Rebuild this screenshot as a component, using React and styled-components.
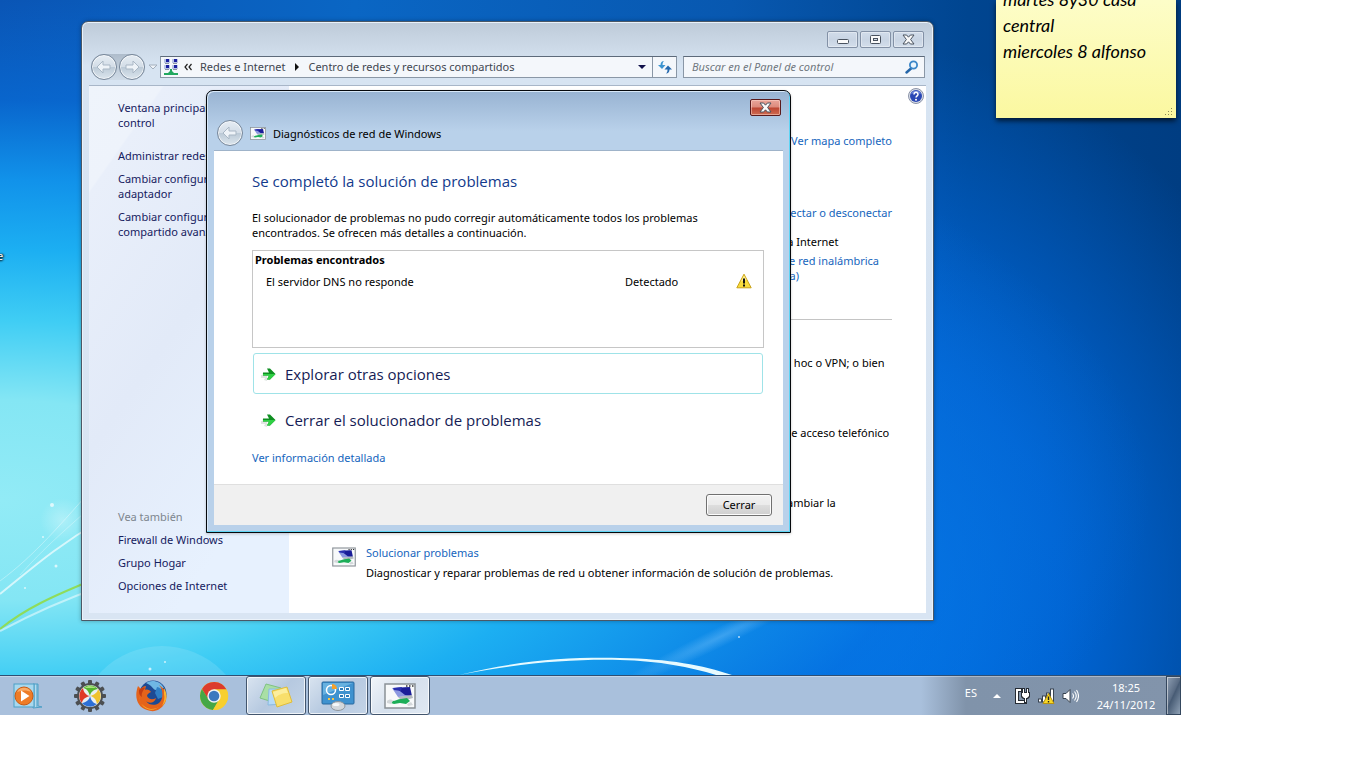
import { useState } from "react";
import styled, { createGlobalStyle, css } from "styled-components";

const GlobalStyle = createGlobalStyle`
  * {
    box-sizing: border-box;
  }
  body {
    margin: 0;
    background: #fff;
    font-family: "Noto Sans", "Open Sans", sans-serif;
    font-size: 11px;
    line-height: 15px;
    color: #000;
  }
  button, input {
    font: inherit;
    color: inherit;
  }
  h1, h2, p, ul {
    margin: 0;
    padding: 0;
  }
`;

/* ---------- desktop ---------- */

const Desktop = styled.main`
  position: relative;
  display: flex;
  flex-direction: column;
  width: calc(100% - 185px);
  height: calc(100vh - 53px);
  min-height: 640px;
  overflow: hidden;
  background:
    radial-gradient(ellipse 1150px 500px at 0 500px, #92ebf6 0%, #84e6f4 20%, #3fcdf4 36%, #1caff2 50%, #1192ea 64%, rgba(8, 112, 220, 0.6) 80%, rgba(8, 100, 205, 0) 100%),
    radial-gradient(ellipse 500px 560px at 840px 600px, #007cf2 0%, rgba(0, 106, 224, 0.85) 45%, rgba(0, 80, 180, 0) 100%),
    linear-gradient(90deg, #0a55b5, #0a66c4 30%, #0858b0 62%, #004590 82%, #003d82 100%);
`;

const Surface = styled.div`
  position: relative;
  flex: 1;
`;

const Streaks = styled.svg`
  position: absolute;
  left: 0;
  bottom: 0;
  width: 100%;
  height: 300px;
`;

const ShortcutLabel = styled.span`
  position: absolute;
  left: -3px;
  top: 248px;
  color: #fff;
  text-shadow: 0 1px 2px #000, 1px 0 2px #000;
`;

/* ---------- sticky note ---------- */

const Note = styled.article`
  position: absolute;
  top: 0;
  right: 5px;
  width: 180px;
  height: 118px;
  padding: 0 7px;
  background: linear-gradient(#fdfdc8, #fbf8a0);
  box-shadow: 0 3px 5px rgba(0, 0, 0, 0.65);
  font-family: "Segoe Print", Lato, sans-serif;
  font-style: italic;
  font-size: 18px;
  line-height: 26px;

  p {
    margin-top: -14px;
  }
  svg {
    position: absolute;
    right: 3px;
    bottom: 2px;
  }
`;

/* ---------- control panel window ---------- */

const Window = styled.section`
  position: absolute;
  left: 81px;
  right: 247px;
  top: 21px;
  bottom: 54px;
  display: flex;
  flex-direction: column;
  padding: 0 7px 7px;
  border: 1px solid #4b5866;
  border-radius: 7px 7px 0 0;
  background: linear-gradient(#becbd9, #d7e4f2 44px, #d9e5f3);
  box-shadow: inset 0 0 0 1px #eaf2fa, 0 0 4px rgba(0, 0, 0, 0.3);
`;

const Caption = styled.header`
  display: flex;
  justify-content: flex-end;
  align-items: flex-end;
  gap: 2px;
  height: 26px;
  padding-right: 2px;
`;

const CaptionButton = styled.button`
  display: flex;
  align-items: center;
  justify-content: center;
  width: 31px;
  height: 17px;
  padding: 0;
  border: 1px solid #8391a6;
  border-radius: 2px;
  background: linear-gradient(#d1dcea, #c8d4e3 50%, #d3deeb);
  box-shadow: inset 0 0 0 1px rgba(255, 255, 255, 0.35);
  ${(props) => props.$danger && css`
    border-color: #5a1a1c;
    background: linear-gradient(#eaa59a, #dc8a7c 48%, #bd4532 52%, #cf6c52);
    box-shadow: inset 0 0 0 1px rgba(255, 220, 210, 0.5);
  `}
`;

const Toolbar = styled.div`
  display: flex;
  align-items: center;
  height: 37px;
  padding: 0 1px 0 2px;
`;

const NavArrows = styled.div`
  display: flex;
  align-items: center;
  gap: 2px;
  margin-right: 3px;
  border-radius: 14px;
  background: linear-gradient(#aebccb, #d0dce8);
`;

const RoundButton = styled.button`
  display: flex;
  align-items: center;
  justify-content: center;
  width: 26px;
  height: 26px;
  padding: 0;
  border: 1px solid #77879a;
  border-radius: 50%;
  background: linear-gradient(#e6edf4 0%, #d3dde7 48%, #bccad7 52%, #dce6ee 100%);
  box-shadow: inset 0 0 0 1px rgba(255, 255, 255, 0.7);
`;

const PlainButton = styled.button`
  display: flex;
  align-items: center;
  justify-content: center;
  padding: 0;
  border: 0;
  background: none;
`;

const AddressBar = styled.nav`
  display: flex;
  align-items: center;
  flex: 1;
  height: 22px;
  margin: 0 6px 0 2px;
  padding-left: 2px;
  border: 1px solid #8a97a6;
  border-top-color: #5d6a7a;
  background: #f4f7fb;
  color: #3f4650;

  a {
    color: inherit;
    text-decoration: none;
  }
`;

const Crumbs = styled.div`
  display: flex;
  align-items: center;
  flex: 1;
  gap: 8px;
  padding-left: 5px;
`;

const Refresh = styled(PlainButton)`
  width: 24px;
  height: 20px;
  margin-left: 5px;
  border-left: 1px solid #8a97a6;
`;

const SearchBox = styled.label`
  display: flex;
  align-items: center;
  width: 242px;
  height: 22px;
  padding: 0 5px 0 8px;
  border: 1px solid #8a97a6;
  border-top-color: #5d6a7a;
  background: #f4f7fb;

  input {
    flex: 1;
    min-width: 0;
    padding: 0;
    border: 0;
    outline: 0;
    background: none;
    font-style: italic;
  }
  input::placeholder {
    color: #707880;
    opacity: 1;
  }
`;

const Body = styled.div`
  display: flex;
  flex: 1;
  min-height: 0;
  border-top: 1px solid #a8b6c8;
  background: #fff;
`;

const Sidebar = styled.aside`
  display: flex;
  flex-direction: column;
  justify-content: space-between;
  width: 200px;
  padding: 14px 6px 20px 29px;
  background: linear-gradient(125deg, #eff4fb 0, #eef3fb 60px, #e9effa 62px, #e2eaf8 45%, #e7f1fe 80%);
`;

const LinkList = styled.ul`
  display: grid;
  gap: 8px;
  list-style: none;

  a {
    color: #15205e;
    text-decoration: none;
  }
  .home {
    margin-bottom: 10px;
  }
  .label {
    color: #7e868e;
  }
`;

const Content = styled.div`
  flex: 1;
  min-width: 0;
  overflow: hidden;
`;

const HelpRow = styled.div`
  display: flex;
  justify-content: flex-end;
  padding: 2px 2px 0;
`;

const Link = styled.a`
  color: #1565bd;
  text-decoration: none;
`;

const NetworkPanel = styled.div`
  display: flex;
  flex-direction: column;
  align-items: flex-end;
  margin: 29px 34px 0 43px;
  padding-bottom: 36px;
  border-bottom: 1px solid #c4c4c4;
`;

const NetworkDetails = styled.div`
  display: grid;
  gap: 4px;
  width: 161px;
  margin-top: 14px;
`;

const ConnectLink = styled(Link)`
  margin-top: 57px;
`;

const TaskList = styled.div`
  display: grid;
  grid-auto-rows: 70px;
  margin: 15px 34px 0 43px;
`;

const Task = styled.div`
  display: grid;
  grid-template-columns: 24px 1fr;
  align-items: start;
  gap: 10px;

  svg {
    margin-top: 2px;
  }
  p {
    margin-top: 5px;
  }
`;

/* ---------- troubleshooter dialog ---------- */

const Dialog = styled.section`
  position: absolute;
  left: 206px;
  top: 90px;
  width: 585px;
  padding: 0 7px 7px;
  border: 1px solid #05080c;
  border-radius: 7px 7px 0 0;
  background: linear-gradient(#98b3d2, #b9d1ea 40px, #b9d1ea);
  box-shadow: inset -1px -1px 0 #5fd5f5, inset 1px 1px 0 #d8e8f8, 0 1px 3px rgba(0, 0, 0, 0.2);
`;

const DialogCaption = styled(Caption)`
  height: 25px;
`;

const DialogTitle = styled.div`
  display: flex;
  align-items: center;
  gap: 7px;
  height: 34px;
  padding-left: 3px;

  h1 {
    font-size: 11px;
    font-weight: 400;
  }
`;

const Client = styled.div`
  padding: 20px 19px 19px 38px;
  border-top: 1px solid #9fb3c9;
  background: #fff;

  h2 {
    font-family: "Open Sans", sans-serif;
    font-size: 15px;
    font-weight: 400;
    line-height: 20px;
    color: #123a8c;
  }
`;

const Summary = styled.p`
  max-width: 480px;
  && {
    margin: 19px 0 10px;
  }
`;

const ProblemBox = styled.div`
  height: 98px;
  padding: 0 2px;
  border: 1px solid #c6c6c6;

  table {
    width: 100%;
    border-collapse: collapse;
  }
  th {
    padding: 0;
    text-align: left;
    line-height: 17px;
  }
  td {
    padding: 5px 0 0;
    vertical-align: middle;
  }
  td:first-child {
    padding-left: 11px;
  }
  td:nth-child(2) {
    width: 111px;
  }
  td:last-child {
    width: 25px;
  }
  svg {
    display: block;
  }
`;

const CommandLink = styled.button`
  display: flex;
  align-items: center;
  gap: 8px;
  width: calc(100% - 2px);
  height: 41px;
  margin: 5px 1px 0;
  padding: 0 7px;
  border: 1px solid ${(props) => (props.$selected ? "#9fe3e8" : "transparent")};
  border-radius: 3px;
  background: #fff;
  color: #151c55;
  font-family: "Open Sans", sans-serif;
  font-size: 15px;
  line-height: 20px;
  text-align: left;
`;

const Details = styled.p`
  && {
    margin-top: 10px;
  }
`;

const DialogFooter = styled.footer`
  display: flex;
  justify-content: flex-end;
  padding: 9px 11px;
  border-top: 1px solid #dfdfdf;
  background: #f0f0f0;
`;

const PushButton = styled.button`
  width: 66px;
  height: 22px;
  padding: 0 0 2px;
  border: 1px solid #707070;
  border-radius: 3px;
  background: linear-gradient(#f2f2f2, #ebebeb 48%, #dddddd 52%, #cfcfcf);
  box-shadow: inset 0 0 0 1px #fcfcfc;
`;

/* ---------- taskbar ---------- */

const Taskbar = styled.footer`
  position: relative;
  display: flex;
  height: 40px;
  border-top: 1px solid #2f4f74;
  background: linear-gradient(90deg, #a9c0dc 0, #a9c0dc calc(100% - 260px), #8093aa calc(100% - 215px), #8294ab 100%);
  box-shadow: inset 0 1px 0 rgba(255, 255, 255, 0.35);
`;

const Apps = styled.div`
  display: flex;
  flex: 1;
  gap: 2px;
  margin-left: -2px;
`;

const AppButton = styled(PlainButton)`
  width: 60px;
  height: 39px;
  ${(props) => props.$open && css`
    border: 1px solid #43566e;
    border-radius: 3px;
    background: linear-gradient(135deg, #d9e4f0, #b6c9e0 50%, #c4d4e7);
    box-shadow: inset 0 0 0 1px rgba(255, 255, 255, 0.75);
  `}
  ${(props) => props.$active && css`
    background: linear-gradient(135deg, #f1f5fa, #d5e0ed 50%, #e0e9f3);
  `}
`;

const Tray = styled.div`
  display: flex;
  align-items: center;
  gap: 7px;
  color: #fff;
`;

const Language = styled.span`
  margin: 0 8px 6px 0;
`;

const HiddenIcons = styled(PlainButton)`
  margin-right: 4px;
`;

const Clock = styled.time`
  width: 80px;
  text-align: center;
  line-height: 17px;
`;

const ShowDesktop = styled.button`
  width: 15px;
  height: 39px;
  margin-left: -7px;
  padding: 0;
  border: 1px solid #34475e;
  background: linear-gradient(115deg, #8f9fb3, #5a6c84 45%, #475b74 50%, #8fa1b5);
  box-shadow: inset 1px 1px 0 rgba(255, 255, 255, 0.5);
`;

/* ---------- drawings ---------- */

const ArrowIcon = ({ flip }) => (
  <svg width="18" height="18" viewBox="0 0 18 18" aria-hidden="true">
    <path
      d={flip ? "M16 9l-6-6v4H3v4h7v4z" : "M2 9l6-6v4h7v4H8v4z"}
      fill="#eef3f8"
      stroke="#a9b7c5"
      strokeLinejoin="round"
    />
  </svg>
);

const CloseIcon = () => (
  <svg width="13" height="11" viewBox="0 0 13 11" aria-hidden="true">
    <path d="M1 1h3.6l1.9 2.2L8.400 1H12L8.600 5.500 12 10H8.400L6.500 7.800 4.600 10H1l3.400-4.500z" fill="#fafafa" stroke="#49525f" strokeLinejoin="round" />
  </svg>
);

const NetworkIcon = () => (
  <svg width="16" height="18" viewBox="0 0 16 18" aria-hidden="true">
    {[[1, 1], [9, 1], [1, 7], [9, 7]].map(([x, y]) => (
      <g key={`${x}-${y}`}>
        <rect x={x} y={y} width="6" height="4" fill="#b8c4e4" />
        <rect x={x + 2} y={y} width="3" height="3" fill="#1a1fa0" />
        <rect x={x + 1} y={y + 4} width="4" height="1" fill="#8a94a6" />
      </g>
    ))}
    <path d="M7 11h2v2l2 2h4v2H1v-2h4l2-2z" fill="#22a860" />
  </svg>
);

const TroubleIcon = ({ width = 16, height = 13 }) => (
  <svg width={width} height={height} viewBox="0 0 32 26" aria-hidden="true">
    <rect x="1" y="1" width="30" height="24" fill="#f7f9fa" stroke="#8a9197" strokeWidth="1.500" />
    <path d="M22 3h1.500M25 3h1.500M28 3h1.500" stroke="#333" strokeWidth="1.500" />
    <path d="M8 5l16-1 3 9-13 1z" fill="#8c98e0" />
    <path d="M12 5l14-1 2 9-7-1z" fill="#1a1d98" />
    <path d="M9 5l9-1-1 4-7-1z" fill="#2a2fae" />
    <path d="M14 14l14-2 1 3-11 3z" fill="#b4bac0" />
    <path d="M8 18c4 0 6-2 9-2l6-1 3 3-4 3-6-1-6 1-3-1z" fill="#1cae58" />
    <path d="M3 18c2-2 5-2 6 0l-2 3-4-1zM23 21l4-2 2 3-5 1z" fill="#d3d7da" />
  </svg>
);

const RefreshIcon = () => (
  <svg width="16" height="16" viewBox="0 0 16 16" aria-hidden="true">
    <path d="M7 2C5 2 3.500 3.500 3.500 6H1l4 4L8.500 6H5.500c0-2 .5-3 1.500-4z" fill="#3c94d0" />
    <path d="M9 14.500c2 0 3.500-1.500 3.500-4H15l-4-4-3.500 4h3c0 2-.5 3-1.500 4z" fill="#2468ae" />
  </svg>
);

const SearchIcon = () => (
  <svg width="14" height="14" viewBox="0 0 14 14" aria-hidden="true">
    <path d="M6 8.500 1.500 12.500" stroke="#2566a8" strokeWidth="2.400" strokeLinecap="round" />
    <circle cx="8.500" cy="5" r="3.600" fill="#eaf5fd" stroke="#3a86c8" strokeWidth="1.800" />
  </svg>
);

const HelpIcon = () => (
  <svg width="16" height="16" viewBox="0 0 16 16" aria-hidden="true">
    <circle cx="8" cy="8" r="7.500" fill="#d9dee8" stroke="#8b93a8" />
    <circle cx="8" cy="8" r="6" fill="#2947b4" />
    <path d="M3 6a5.500 5.500 0 0 1 10 0c-3-1.500-7-1.500-10 0z" fill="#7089dc" />
    <path d="M6 6.500c0-3 4.200-2.700 4 0C9.900 7.800 8 8 8 9.600" fill="none" stroke="#fff" strokeWidth="1.500" />
    <circle cx="8" cy="11.700" r="1" fill="#fff" />
  </svg>
);

const WarningIcon = () => (
  <svg width="16" height="16" viewBox="0 0 16 16" aria-label="Advertencia">
    <path d="M8 1.200 15.200 14.800H.8z" fill="#f9dc3c" stroke="#c9a116" strokeLinejoin="round" />
    <path d="M8 2.500 10.500 7 5 8.500z" fill="#fdf09a" />
    <path d="M8 5.500v5" stroke="#111" strokeWidth="2" />
    <path d="M8 11.500v2" stroke="#111" strokeWidth="2" />
  </svg>
);

const GreenArrow = () => (
  <svg width="16" height="16" viewBox="0 0 16 16" aria-hidden="true">
    <path d="M0 9h6v6l-3-1 1-2H0z" fill="#cdd3cf" opacity="0.600" />
    <path d="M1.500 7h6.500V2.500L14.500 8.500 8 14.500V10H1.500z" fill="#cdd3cf" opacity="0.500" />
    <path d="M2 6.500h6L6 2.500h3L14.500 8 9 13.500H6l2-4H2z" fill="#0f8f22" />
    <path d="M2 8h12.500L9 13.500H6l2-4H2z" fill="#2fd044" />
  </svg>
);

const MediaPlayerIcon = () => (
  <svg width="30" height="28" viewBox="0 0 30 28" aria-hidden="true">
    <path d="M20 2h5v22l4 1-9 1zM21 2v23M24 2v23" fill="#b5dbee" stroke="#4d9fc6" />
    <rect x="1" y="2" width="20" height="23" fill="#a8d8ee" stroke="#4d9fc6" />
    <circle cx="11" cy="14" r="9" fill="#ee7c27" stroke="#c95a12" />
    <path d="M4 10a8 8 0 0 1 14 0c-4-2-9-2-14 0z" fill="#f8ab68" />
    <path d="M8 8.500v11l8.500-5.500z" fill="#fff" />
  </svg>
);

const PinwheelIcon = () => (
  <svg width="34" height="34" viewBox="-17 -17 34 34" aria-hidden="true">
    {[0, 30, 60, 90, 120, 150, 180, 210, 240, 270, 300, 330].map((a) => (
      <rect key={a} x="-2" y="-16" width="4" height="6" rx="1" fill="#4c4f52" transform={`rotate(${a})`} />
    ))}
    <circle r="13" fill="#4c4f52" />
    <circle r="11" fill="#e9eef0" />
    {["#55b52e", "#efc22c", "#2c6fd6", "#e03a26"].map((color, i) => (
      <path key={color} d="M0 0C-2-5-5-7-8-7A10.600 10.600 0 0 1 7-8C3-7 0-4 0 0z" fill={color} transform={`rotate(${i * 90 + 8})`} />
    ))}
    <path d="M-5-8C-2-11 3-10 6-8 3-8-1-8-5-8z" fill="#a8e07c" />
  </svg>
);

const FirefoxIcon = () => (
  <svg width="34" height="34" viewBox="0 0 34 34" aria-hidden="true">
    <circle cx="18" cy="15" r="13.500" fill="#1d4a94" />
    <path d="M11 4c5-4 15-2 18 5-3 0-4 3-8 2-3 0-4-5-10-7z" fill="#6fb7e4" />
    <path d="M22 8c5 1 7 5 6 10l-5 2-3-6z" fill="#2f7fc6" />
    <path
      d="M3 7l3 3c1-2 3-3 5-3l-1 4c2-1 5 0 6 2-2 1-4 2-4 4 2 4 6 4 9 2-1 5-7 6-10 3 4 6 14 5 16-3 1-5 0-10-3-13 7 4 9 12 6 18C26 31 19 34 12 31 2 28-1 18 3 7z"
      fill="#e5631b"
    />
    <path d="M29 9c4 6 3 14-2 18 2-4 3-8 2-12zM4 17c0 7 5 12 12 13 4 0 7-1 9-3-7 7-20 4-21-10z" fill="#f9b32c" />
    <path d="M4 11c2-2 4-3 6-2-2 3-4 5-3 9-3-2-3-4-3-7z" fill="#c43c12" />
  </svg>
);

const ChromeIcon = () => (
  <svg width="30" height="30" viewBox="0 0 30 30" aria-hidden="true">
    <circle cx="15" cy="15" r="14" fill="#f7cf2e" />
    <path d="M3 8A14 14 0 0 1 27.500 8.500H15L9 18z" fill="#dc3b2c" />
    <path d="M2.900 8A14 14 0 0 0 14 29l6-10.500-11-1z" fill="#45a746" />
    <path d="M14.500 8.500h13A14 14 0 0 1 14 29l6.500-10.500z" fill="#f7cf2e" />
    <circle cx="15" cy="15" r="6.700" fill="#f2f4f4" />
    <circle cx="15" cy="15" r="5.300" fill="#3c79bf" />
  </svg>
);

const NotesIcon = () => (
  <svg width="34" height="28" viewBox="0 0 34 28" aria-hidden="true">
    <path d="M7 2l15 4-5 15L1 16z" fill="#a9dfa5" stroke="#7fc283" />
    <path d="M10 7l15 0 0 15-16 1z" fill="#b6dbf7" stroke="#8abbe0" />
    <path d="M13 9l15-4 5 15-15 5z" fill="#f8df6c" stroke="#e0bd3c" />
    <path d="M14 10l13-4 2 5c-6 0-10 2-13 5z" fill="#fcee9c" />
  </svg>
);

const ControlPanelIcon = () => (
  <svg width="34" height="30" viewBox="0 0 34 30" aria-hidden="true">
    <rect x="1" y="1" width="32" height="22" rx="1" fill="#3f92cf" stroke="#28699f" />
    <path d="M2 2h30L2 14z" fill="#67b1e0" />
    <circle cx="10" cy="9" r="4.500" fill="none" stroke="#fff" strokeWidth="1.500" />
    <path d="M11 8V3a5 5 0 0 1 5 5z" fill="#f6a12c" />
    <path d="M18.500 6.500h4v3h-4zM24.500 6.500h4v3h-4zM18.500 13.500h4v3h-4zM24.500 13.500h4v3h-4z" fill="#2d7ab8" stroke="#fff" />
    <path d="M7 17h2v2H7zM11 17h2v2h-2z" fill="#f9c440" />
    <ellipse cx="17" cy="25" rx="7" ry="4.500" fill="#d4d8dc" stroke="#8f969c" />
    <ellipse cx="15" cy="23.500" rx="3.500" ry="1.600" fill="#f6f8f9" />
  </svg>
);

const PlugIcon = () => (
  <svg width="18" height="18" viewBox="0 0 18 18" aria-hidden="true">
    <path d="M8 3H4v12h8" fill="none" stroke="#252b33" strokeWidth="4" strokeLinecap="square" />
    <path d="M8 3H4v12h8" fill="none" stroke="#fff" strokeWidth="2" />
    <path d="M9 1h3v4h1V1h3v4h1v5l-2 2h-1v4h-3v-4h-1l-2-2V5h1z" fill="#252b33" />
    <path d="M10 2h1v4h3V2h1v4h1v3l-2 2h-1v4h-1v-4h-1L9 9V6h1z" fill="#fff" />
  </svg>
);

const SignalIcon = () => (
  <svg width="17" height="16" viewBox="0 0 17 16" aria-hidden="true">
    {[[0, 11, 3], [4, 8, 6], [8, 5, 9], [12, 1, 13]].map(([x, y, h]) => (
      <rect key={x} x={x + 0.5} y={y} width="3" height={h} fill="#fff" stroke="#384350" />
    ))}
    <path d="M10.500 5.500 16 15.500H5z" fill="#f8d827" stroke="#b7920f" />
    <path d="M10.500 8.500v3.500M10.500 13v1.500" stroke="#222" strokeWidth="1.400" />
  </svg>
);

const SpeakerIcon = () => (
  <svg width="17" height="16" viewBox="0 0 17 16" aria-hidden="true">
    <path d="M1 5.500h3L8 1.500v13l-4-4H1z" fill="#fff" stroke="#384350" />
    <path d="M10.500 5.500q2 2.500 0 5M12.500 3.500q3.500 4.500 0 9M14.500 2q4 6 0 12" fill="none" stroke="#fff" strokeWidth="1.100" />
  </svg>
);

const Triangle = ({ d, fill, stroke }) => (
  <svg width="10" height="8" viewBox="0 0 10 8" aria-hidden="true">
    <path d={d} fill={fill} stroke={stroke} />
  </svg>
);

/* ---------- data ---------- */

const tasks = [
  {
    title: "Configurar una nueva conexión o red",
    text: "Configurar alguna conexión inalámbrica, de banda ancha, de acceso telefónico, ad hoc o VPN; o bien configurar un enrutador o punto de acceso.",
  },
  {
    title: "Conectarse a una red",
    text: "Conectarse o volver a conectarse a una conexión de red inalámbrica, cableada, o de acceso telefónico o VPN.",
  },
  {
    title: "Elegir grupo en el hogar y opciones de uso compartido",
    text: "Obtener acceso a archivos e impresoras ubicados en otros equipos de una red o cambiar la configuración de uso compartido.",
  },
  {
    title: "Solucionar problemas",
    text: "Diagnosticar y reparar problemas de red u obtener información de solución de problemas.",
  },
];

const apps = [
  { name: "Reproductor de Windows Media", Icon: MediaPlayerIcon },
  { name: "Galería", Icon: PinwheelIcon },
  { name: "Firefox", Icon: FirefoxIcon },
  { name: "Chrome", Icon: ChromeIcon },
  { name: "Notas rápidas", Icon: NotesIcon, open: true },
  { name: "Panel de control", Icon: ControlPanelIcon, open: true },
  { name: "Diagnósticos de red", Icon: () => <TroubleIcon width={32} height={26} />, open: true, active: true },
];

function ControlPanel() {
  return (
    <Window aria-label="Centro de redes y recursos compartidos">
      <Caption>
        <CaptionButton aria-label="Minimizar">
          <svg width="12" height="10" viewBox="0 0 12 10"><rect x="0.500" y="4.500" width="11" height="4" rx="1" fill="#fafafa" stroke="#49525f" /></svg>
        </CaptionButton>
        <CaptionButton aria-label="Maximizar">
          <svg width="11" height="9" viewBox="0 0 11 9">
            <rect x="0.500" y="0.500" width="10" height="8" rx="1" fill="#fafafa" stroke="#49525f" />
            <rect x="3.500" y="3.500" width="4" height="2" fill="#cfd9e5" stroke="#49525f" />
          </svg>
        </CaptionButton>
        <CaptionButton aria-label="Cerrar ventana"><CloseIcon /></CaptionButton>
      </Caption>

      <Toolbar>
        <NavArrows>
          <RoundButton aria-label="Atrás"><ArrowIcon /></RoundButton>
          <RoundButton aria-label="Adelante"><ArrowIcon flip /></RoundButton>
        </NavArrows>
        <PlainButton aria-label="Páginas recientes">
          <Triangle d="M1 2h8L5 6z" fill="#eef3f8" stroke="#a3afbd" />
        </PlainButton>
        <AddressBar aria-label="Dirección">
          <NetworkIcon />
          <Crumbs>
            <svg width="8" height="8" viewBox="0 0 8 8" aria-hidden="true"><path d="M3.500 1 1 4l2.500 3M7.500 1 5 4l2.500 3" fill="none" stroke="#222" strokeWidth="1.200" /></svg>
            <a href="#redes">Redes e Internet</a>
            <svg width="7" height="8" viewBox="0 0 7 8" aria-hidden="true"><path d="M2 0l4 4-4 4z" fill="#111" /></svg>
            <a href="#centro">Centro de redes y recursos compartidos</a>
          </Crumbs>
          <PlainButton aria-label="Ubicaciones anteriores">
            <Triangle d="M1 2h8L5 6z" fill="#10104a" />
          </PlainButton>
          <Refresh aria-label="Actualizar"><RefreshIcon /></Refresh>
        </AddressBar>
        <SearchBox>
          <input type="text" placeholder="Buscar en el Panel de control" aria-label="Buscar" />
          <SearchIcon />
        </SearchBox>
      </Toolbar>

      <Body>
        <Sidebar>
          <LinkList>
            <li className="home"><a href="#inicio">Ventana principal del Panel de control</a></li>
            <li><a href="#inalambricas">Administrar redes inalámbricas</a></li>
            <li><a href="#adaptador">Cambiar configuración del adaptador</a></li>
            <li><a href="#compartido">Cambiar configuración de uso compartido avanzado</a></li>
          </LinkList>
          <LinkList>
            <li className="label">Vea también</li>
            <li><a href="#firewall">Firewall de Windows</a></li>
            <li><a href="#grupo">Grupo Hogar</a></li>
            <li><a href="#opciones">Opciones de Internet</a></li>
          </LinkList>
        </Sidebar>
        <Content>
          <HelpRow>
            <PlainButton aria-label="Ayuda"><HelpIcon /></PlainButton>
          </HelpRow>
          <NetworkPanel>
            <Link href="#mapa">Ver mapa completo</Link>
            <ConnectLink href="#conectar">Conectar o desconectar</ConnectLink>
            <NetworkDetails>
              <span>Sin acceso a Internet</span>
              <Link href="#conexion">Conexión de red inalámbrica<br />(Red de casa)</Link>
            </NetworkDetails>
          </NetworkPanel>
          <TaskList>
            {tasks.map((task) => (
              <Task key={task.title}>
                <TroubleIcon width={24} height={20} />
                <div>
                  <Link href="#tarea">{task.title}</Link>
                  <p>{task.text}</p>
                </div>
              </Task>
            ))}
          </TaskList>
        </Content>
      </Body>
    </Window>
  );
}

function Troubleshooter() {
  const [selected, setSelected] = useState(0);

  return (
    <Dialog role="dialog" aria-label="Diagnósticos de red de Windows">
      <DialogCaption>
        <CaptionButton $danger aria-label="Cerrar diálogo"><CloseIcon /></CaptionButton>
      </DialogCaption>
      <DialogTitle>
        <RoundButton aria-label="Volver"><ArrowIcon /></RoundButton>
        <TroubleIcon />
        <h1>Diagnósticos de red de Windows</h1>
      </DialogTitle>
      <Client>
        <h2>Se completó la solución de problemas</h2>
        <Summary>
          El solucionador de problemas no pudo corregir automáticamente todos los problemas
          encontrados. Se ofrecen más detalles a continuación.
        </Summary>
        <ProblemBox>
          <table>
            <thead>
              <tr><th colSpan="3">Problemas encontrados</th></tr>
            </thead>
            <tbody>
              <tr>
                <td>El servidor DNS no responde</td>
                <td>Detectado</td>
                <td><WarningIcon /></td>
              </tr>
            </tbody>
          </table>
        </ProblemBox>
        {["Explorar otras opciones", "Cerrar el solucionador de problemas"].map((label, i) => (
          <CommandLink key={label} $selected={selected === i} onClick={() => setSelected(i)}>
            <GreenArrow />
            {label}
          </CommandLink>
        ))}
        <Details><Link href="#detalles">Ver información detallada</Link></Details>
      </Client>
      <DialogFooter>
        <PushButton>Cerrar</PushButton>
      </DialogFooter>
    </Dialog>
  );
}

function App() {
  return (
    <>
      <GlobalStyle />
      <Desktop>
        <Surface>
          <Streaks viewBox="0 0 1181 300" preserveAspectRatio="xMinYMax slice" aria-hidden="true">
            <defs>
              <radialGradient id="glow">
                <stop offset="0" stopColor="#fff" stopOpacity="0.300" />
                <stop offset="1" stopColor="#fff" stopOpacity="0" />
              </radialGradient>
              <radialGradient id="beam">
                <stop offset="0" stopColor="#8fd0ff" stopOpacity="0.350" />
                <stop offset="1" stopColor="#8fd0ff" stopOpacity="0" />
              </radialGradient>
            </defs>
            <circle cx="62" cy="145" r="22" fill="url(#glow)" />
            <g fill="none" stroke="#fff">
              <path d="M0 219C30 195 55 172 100 146" opacity="0.650" strokeWidth="2" />
              <path d="M0 206C35 180 60 150 100 105" opacity="0.350" />
              <path d="M20 200C45 172 65 155 100 124" opacity="0.300" />
              <path d="M0 256C30 240 60 226 100 212" opacity="0.500" strokeWidth="2" />
            </g>
            <path d="M0 254C25 234 50 222 100 202" fill="none" stroke="#8fdc5a" strokeWidth="2" />
            <circle cx="162" cy="356" r="85" fill="#fff" opacity="0.120" />
            <ellipse cx="720" cy="262" rx="120" ry="10" fill="url(#beam)" transform="rotate(-26 720 262)" />
            <path d="M459 300C520 285 570 282 620 283 670 284 702 290 732 300L716 300C690 292 660 286 620 285 570 284 520 288 459 300z" fill="#e6faff" />
            <g fill="#fff" opacity="0.700">
              <circle cx="52" cy="130" r="2" />
              <circle cx="56" cy="191" r="1.500" />
              <circle cx="25" cy="213" r="1" />
              <circle cx="43" cy="162" r="1" />
              <circle cx="165" cy="287" r="1" />
              <circle cx="150" cy="294" r="1.500" />
              <circle cx="739" cy="262" r="1" />
            </g>
          </Streaks>
          <ShortcutLabel>e</ShortcutLabel>
          <ControlPanel />
          <Troubleshooter />
          <Note>
            <p>martes 8y30 casa<br />central<br />miercoles 8 alfonso</p>
            <svg width="9" height="9" viewBox="0 0 9 9" aria-hidden="true">
              <path d="M7 1h1v1H7zM4 4h1v1H4zM7 4h1v1H7zM1 7h1v1H1zM4 7h1v1H4zM7 7h1v1H7z" fill="#8f8d58" />
            </svg>
          </Note>
        </Surface>

        <Taskbar>
          <Apps>
            {apps.map(({ name, Icon, open, active }) => (
              <AppButton key={name} aria-label={name} $open={open} $active={active}>
                <Icon />
              </AppButton>
            ))}
          </Apps>
          <Tray>
            <Language>ES</Language>
            <HiddenIcons aria-label="Mostrar iconos ocultos">
              <Triangle d="M1 6h8L5 2z" fill="#fff" />
            </HiddenIcons>
            <PlugIcon />
            <SignalIcon />
            <SpeakerIcon />
            <Clock>18:25<br />24/11/2012</Clock>
            <ShowDesktop aria-label="Mostrar escritorio" />
          </Tray>
        </Taskbar>
      </Desktop>
    </>
  );
}

export default App;
